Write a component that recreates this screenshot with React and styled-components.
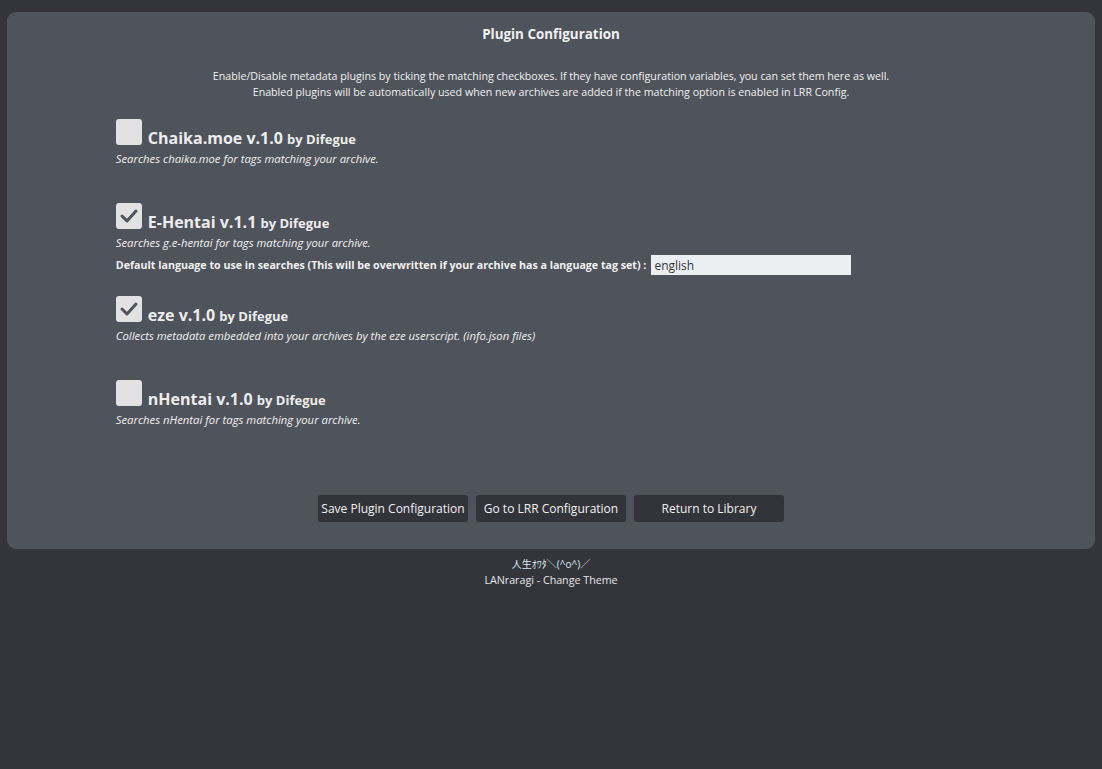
import React from "react";
import styled, { createGlobalStyle } from "styled-components";

const Global = createGlobalStyle`
  html, body { margin: 0; padding: 0; background: #34353b; }
  body {
    font-family: "Open Sans", "Noto Sans", sans-serif;
    color: #f1f1f1;
    font-size: 11px;
  }
`;

const Page = styled.div`
  padding: 12px 7px 0 7px;
  min-height: 769px;
  box-sizing: border-box;
`;

const Card = styled.div`
  background: #4f535b;
  border-radius: 9px;
  padding: 14px 0 27px;
  display: flex;
  flex-direction: column;
  align-items: center;
`;

const Title = styled.h2`
  margin: 0;
  font-size: 13.4px;
  font-weight: 700;
  line-height: 16px;
  color: #f1f1f1;
`;

const Intro = styled.p`
  margin: 26px 0 0;
  text-align: center;
  font-size: 10.66px;
  line-height: 16px;
  color: #f1f1f1;
`;

const PluginList = styled.div`
  width: 80%;
  margin-top: 19px;
  display: flex;
  flex-direction: column;
`;

const Plugin = styled.div`
  padding-bottom: 19px;
`;

const Header = styled.label`
  display: flex;
  align-items: flex-end;
  height: 26px;
  gap: 6px;
`;

const Box = styled.span`
  width: 26px;
  height: 26px;
  border-radius: 3px;
  background: #e2e2e2;
  display: flex;
  align-items: center;
  justify-content: center;
  flex: none;
`;

const Name = styled.span`
  font-size: 16px;
  font-weight: 700;
  line-height: 16px;
  color: #ededed;
  position: relative;
  top: 2px;
`;

const By = styled.span`
  font-size: 13px;
  font-weight: 700;
`;

const Desc = styled.div`
  margin-top: 6px;
  font-style: italic;
  font-size: 11.3px;
  line-height: 16px;
  color: #f1f1f1;
`;

const Args = styled.div`
  min-height: 17px;
`;

const ArgRow = styled.div`
  margin-top: 2px;
  height: 24px;
  display: flex;
  align-items: center;
  gap: 5px;
  font-weight: 700;
  font-size: 10.66px;
`;

const Input = styled.input`
  width: 200px;
  height: 20px;
  box-sizing: border-box;
  border: none;
  outline: none;
  background: #eceff1;
  color: #33343a;
  font-family: "Open Sans", "Noto Sans", sans-serif;
  font-size: 12px;
  padding: 0 3px;
  margin: 0;
`;

const Buttons = styled.div`
  display: flex;
  gap: 8px;
  margin-top: 31px;
`;

const Button = styled.button`
  width: 150px;
  height: 27px;
  border: none;
  border-radius: 3px;
  background: #33343a;
  color: #f1f1f1;
  font-family: "Open Sans", "Noto Sans", sans-serif;
  font-size: 12px;
  padding: 0;
  cursor: pointer;
`;

const Footer = styled.div`
  text-align: center;
  padding-top: 7px;
  font-size: 10.7px;
  line-height: 16px;
  color: #e6e6e6;
`;

const Kao = styled.div`
  font-family: "Open Sans", "Noto Sans CJK JP", sans-serif;
  font-size: 10px;
  color: #dde8f0;
`;

const Check = () => (
  <svg width="20" height="16" viewBox="0 0 20 16">
    <path d="M3 8 L8 13 L17 3" fill="none" stroke="#4f535b" strokeWidth="3" strokeLinecap="round" strokeLinejoin="round" />
  </svg>
);

const plugins = [
  { name: "Chaika.moe v.1.0", desc: "Searches chaika.moe for tags matching your archive.", checked: false },
  {
    name: "E-Hentai v.1.1",
    desc: "Searches g.e-hentai for tags matching your archive.",
    checked: true,
    args: [{ label: "Default language to use in searches (This will be overwritten if your archive has a language tag set) :", value: "english" }],
  },
  { name: "eze v.1.0", desc: "Collects metadata embedded into your archives by the eze userscript. (info.json files)", checked: true },
  { name: "nHentai v.1.0", desc: "Searches nHentai for tags matching your archive.", checked: false },
];

export default function App() {
  return (
    <Page>
      <Global />
      <Card>
        <Title>Plugin Configuration</Title>
        <Intro>
          Enable/Disable metadata plugins by ticking the matching checkboxes. If they have configuration variables, you can set them here as well.
          <br />
          Enabled plugins will be automatically used when new archives are added if the matching option is enabled in LRR Config.
        </Intro>
        <PluginList>
          {plugins.map((p) => (
            <Plugin key={p.name}>
              <Header>
                <Box>{p.checked && <Check />}</Box>
                <Name>
                  {p.name} <By>by Difegue</By>
                </Name>
              </Header>
              <Desc>{p.desc}</Desc>
              <Args>
                {(p.args || []).map((a) => (
                  <ArgRow key={a.label}>
                    <span>{a.label}</span>
                    <Input defaultValue={a.value} />
                  </ArgRow>
                ))}
              </Args>
            </Plugin>
          ))}
        </PluginList>
        <Buttons>
          <Button>Save Plugin Configuration</Button>
          <Button>Go to LRR Configuration</Button>
          <Button>Return to Library</Button>
        </Buttons>
      </Card>
      <Footer>
        <Kao>人生ｵﾜﾀ＼(^o^)／</Kao>
        <div>LANraragi - Change Theme</div>
      </Footer>
    </Page>
  );
}
